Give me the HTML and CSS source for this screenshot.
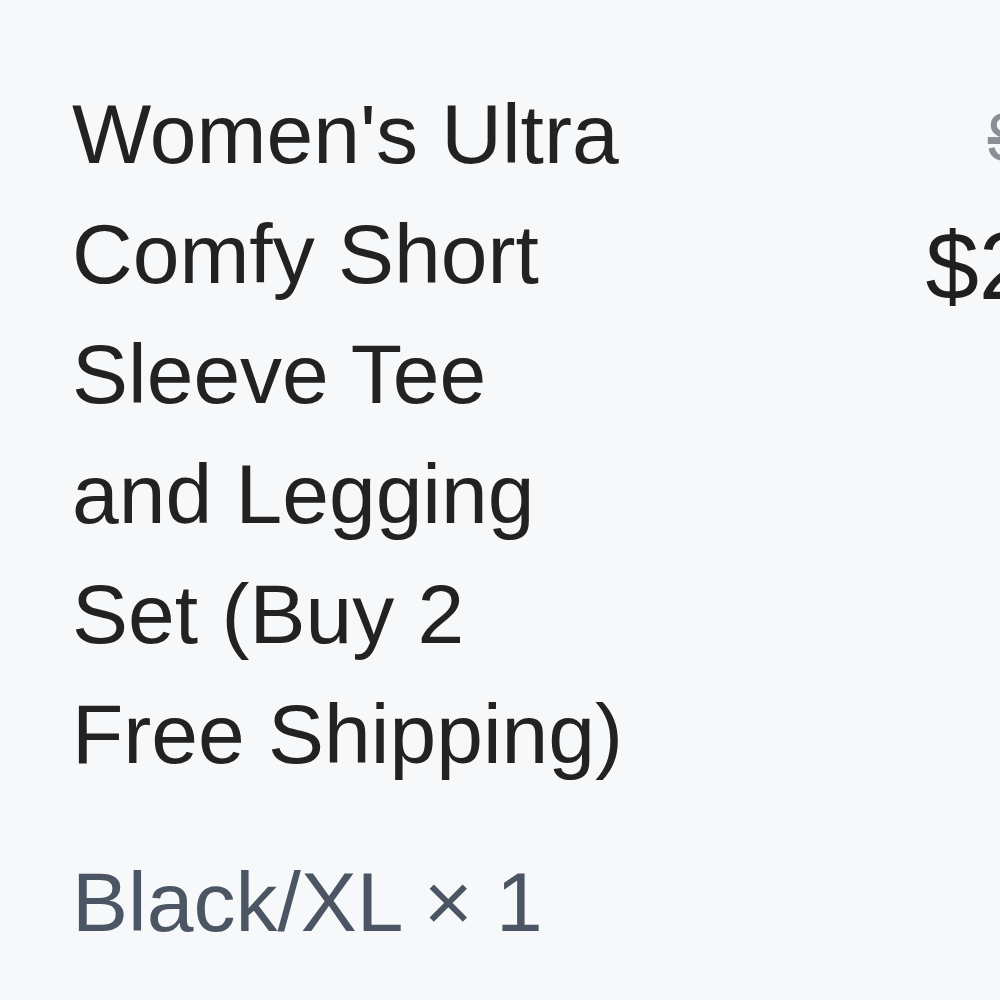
FILE: index.html
```html
<!DOCTYPE html>
<html lang="en">
<head>
<meta charset="utf-8">
<title>Cart item</title>
<link rel="stylesheet" href="styles.css">
</head>
<body>
<div class="item">
  <div class="info">
    <div class="title">Women's Ultra Comfy Short Sleeve Tee and Legging Set (Buy 2 Free Shipping)</div>
    <div class="variant">Black/XL × 1</div>
  </div>
  <div class="prices">
    <div class="old-price">$39.99</div>
    <div class="price">$29.99</div>
  </div>
</div>
</body>
</html>
```

FILE: styles.css
```css
html, body {
  margin: 0;
  padding: 0;
  overflow: hidden;
  background: #f6f8fa;
}
body {
  font-family: "Liberation Sans", Arial, sans-serif;
  width: 1000px;
  height: 1000px;
}
.item {
  display: flex;
  align-items: flex-start;
  padding: 74px 0 0 72px;
  width: 1400px;
}
.info {
  width: 560px;
  flex: none;
}
.title {
  font-size: 84px;
  line-height: 120px;
  color: #222222;
}
.variant {
  margin-top: 48px;
  font-size: 84px;
  line-height: 120px;
  color: #4b5563;
}
.prices {
  flex: none;
  width: 294px;
  margin-left: 293px;
  text-align: right;
}
.old-price {
  font-size: 72px;
  line-height: 114px;
  padding: 6px 11px 0 0;
  color: #8a8f96;
  text-decoration: line-through;
}
.price {
  font-size: 96px;
  line-height: 144px;
  color: #1f1f1f;
}
```
